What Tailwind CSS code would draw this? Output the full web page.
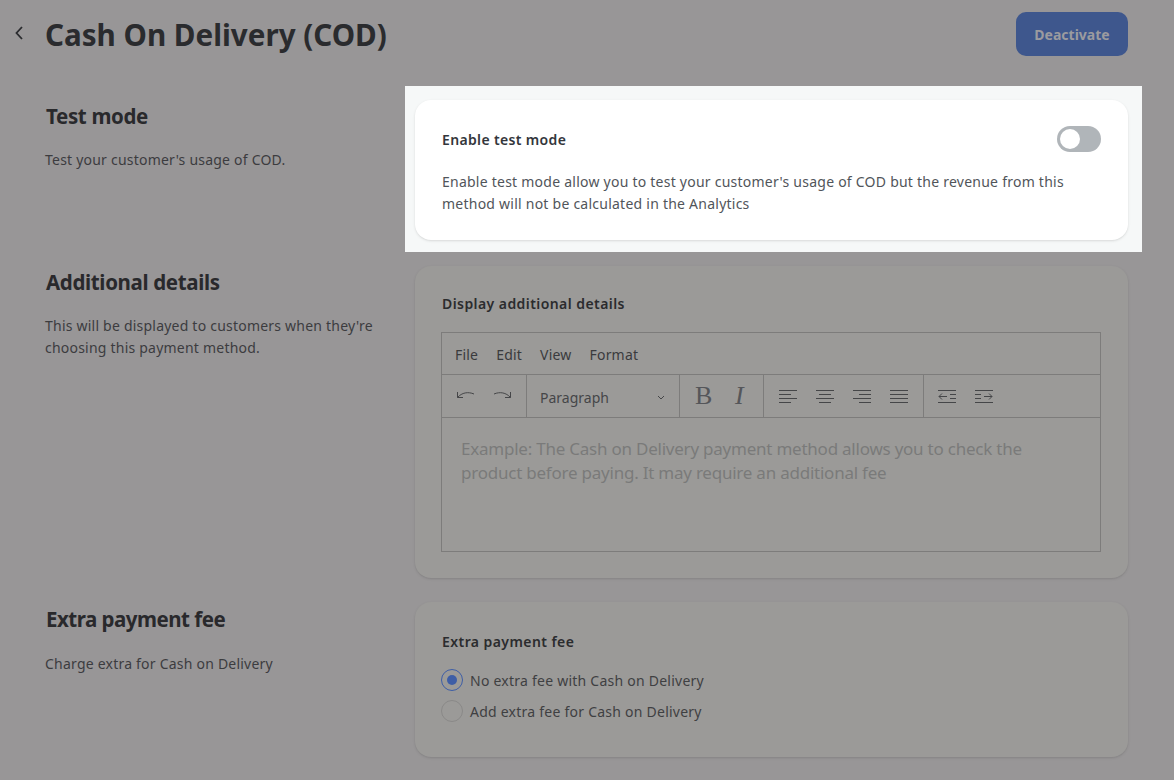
<!DOCTYPE html>
<html lang="en">
<head>
<meta charset="utf-8">
<title>Cash On Delivery (COD)</title>
<script src="https://cdn.jsdelivr.net/npm/@tailwindcss/browser@4"></script>
</head>
<body class="bg-[#989697] font-['Noto_Sans',sans-serif] text-[#29292c] overflow-hidden">
<div class="h-[780px] w-[1174px] overflow-hidden">

    <!-- header -->
    <div class="flex items-center h-[68px] pl-[14px] pr-[46px]">
        <svg class="w-[10px] h-[16px] text-[#2a2b2e] mb-[2px]" fill="none" stroke="currentColor" viewBox="0 0 10 16"><path stroke-width="1.8" d="M8 2L2.5 8 8 14"></path></svg>
        <h1 class="ml-[21px] mt-[2px] text-[29.6px] font-bold leading-none text-[#2a2b2e]">Cash On Delivery (COD)</h1>
        <button class="ml-auto w-[112px] h-[44px] rounded-[10px] bg-[#3e578d] text-[#9b9b9f] text-[14px] font-bold">Deactivate</button>
    </div>

    <!-- test mode -->
    <div class="flex items-start mt-[18px] pl-[45px]">
        <div class="w-[360px] pt-[16px]">
            <h2 class="pl-px text-[20.5px] font-bold leading-[28px] tracking-[-0.35px]">Test mode</h2>
            <p class="mt-[19px] text-[14px] leading-[22px] tracking-[0.22px] text-[#3c3c3f]">Test your customer's usage of COD.</p>
        </div>
        <div class="bg-[#f6f8f8] pt-[14px] pl-[10px] pr-[14px] pb-[12px]">
            <div class="w-[713px] h-[140px] bg-white rounded-[16px] shadow-sm px-[27px] pt-[25px]">
                <div class="flex items-center justify-between h-[28px]">
                    <span class="text-[14px] font-semibold tracking-[0.35px] text-[#33363b]">Enable test mode</span>
                    <span class="w-[44px] h-[26px] rounded-full bg-[#b0b5b9] p-[3px]"><span class="block w-[20px] h-[20px] rounded-full bg-white"></span></span>
                </div>
                <p class="mt-[18px] text-[14px] leading-[22px] tracking-[0.24px] text-[#51555a]">Enable test mode allow you to test your customer's usage of COD but the revenue from this<br>method will not be calculated in the Analytics</p>
            </div>
        </div>
    </div>

    <!-- additional details -->
    <div class="flex items-start mt-[14px] pl-[45px]">
        <div class="w-[370px] pt-[2px]">
            <h2 class="pl-px text-[20.5px] font-bold leading-[28px] tracking-[-0.35px]">Additional details</h2>
            <p class="mt-[19px] w-[340px] text-[14px] leading-[22px] tracking-[0.22px] text-[#3c3c3f]">This will be displayed to customers when they're choosing this payment method.</p>
        </div>
        <div class="w-[713px] h-[312px] bg-[#9b9a98] rounded-[16px] shadow-sm px-[26px] pt-[26px]">
            <div class="pl-px text-[14px] font-semibold leading-[24px] tracking-[0.43px] text-[#2b2c2e]">Display additional details</div>
            <div class="mt-[16px] w-[660px] h-[220px] border border-[#7d7c7b] flex flex-col text-[#3a3b3d] text-[14px]">
                <div class="flex items-center gap-[18px] h-[42px] pl-[13px] pt-[2px] border-b border-[#7d7c7b] tracking-[0.2px]">
                    <span>File</span><span>Edit</span><span>View</span><span>Format</span>
                </div>
                <div class="flex h-[43px] border-b border-[#7d7c7b] text-[#454648]">
                    <div class="flex items-center gap-[18px] w-[85px] pl-[14px] border-r border-[#7d7c7b]">
                        <svg class="w-[19px] h-[12px]" fill="none" stroke="currentColor" viewBox="0 0 19 12"><path d="M1.5 2v5.5H7M1.5 7.5C6 2.5 12 1.500 18 4"></path></svg>
                        <svg class="w-[19px] h-[12px]" fill="none" stroke="currentColor" viewBox="0 0 19 12"><path d="M17.500 2v5.500H12M17.500 7.500C13 2.500 7 1.500 1 4"></path></svg>
                    </div>
                    <div class="flex items-center justify-between w-[153px] pl-[13px] pr-[14px] pt-[2px] border-r border-[#7d7c7b]">
                        <span>Paragraph</span>
                        <svg class="w-[8px] h-[5px]" fill="none" stroke="currentColor" viewBox="0 0 8 5"><path d="M1 1l3 3 3-3"></path></svg>
                    </div>
                    <div class="flex items-center gap-[22px] w-[84px] pl-[15px] border-r border-[#7d7c7b]">
                        <span class="font-['Liberation_Serif',serif] text-[26px] leading-none text-[#55565a] w-[18px]">B</span>
                        <span class="font-['Liberation_Serif',serif] text-[26px] leading-none italic text-[#55565a]">I</span>
                    </div>
                    <div class="flex items-center gap-[19px] w-[160px] pl-[15px] border-r border-[#7d7c7b]">
                        <svg class="w-[18px] h-[15px]" stroke="currentColor" viewBox="0 0 18 15"><path d="M0 1.500h18M0 5.500h12M0 9.500h18M0 13.500h12"></path></svg>
                        <svg class="w-[18px] h-[15px]" stroke="currentColor" viewBox="0 0 18 15"><path d="M0 1.500h18M3 5.500h12M0 9.500h18M3 13.500h12"></path></svg>
                        <svg class="w-[18px] h-[15px]" stroke="currentColor" viewBox="0 0 18 15"><path d="M0 1.500h18M6 5.500h12M0 9.500h18M6 13.500h12"></path></svg>
                        <svg class="w-[18px] h-[15px]" stroke="currentColor" viewBox="0 0 18 15"><path d="M0 1.500h18M0 5.500h18M0 9.500h18M0 13.500h18"></path></svg>
                    </div>
                    <div class="flex items-center gap-[19px] pl-[14px]">
                        <svg class="w-[18px] h-[15px]" fill="none" stroke="currentColor" viewBox="0 0 18 15"><path d="M0 1.500h18M12 5.500h6M12 9.500h6M0 13.500h18M9 7.500H1M4 4.500l-3 3 3 3"></path></svg>
                        <svg class="w-[18px] h-[15px]" fill="none" stroke="currentColor" viewBox="0 0 18 15"><path d="M0 1.500h18M0 5.500h6M0 9.500h6M0 13.500h18M9 7.500h8M14 4.500l3 3-3 3"></path></svg>
                    </div>
                </div>
                <div class="px-[19px] pt-[19px] text-[17px] leading-[24px] tracking-[-0.23px] text-[#7a7a7a]">Example: The Cash on Delivery payment method allows you to check the<br>product before paying. It may require an additional fee</div>
            </div>
        </div>
    </div>

    <!-- extra payment fee -->
    <div class="flex items-start mt-[24px] pl-[45px]">
        <div class="w-[370px] pt-[3px]">
            <h2 class="pl-px text-[20.5px] font-bold leading-[28px] tracking-[-0.5px]">Extra payment fee</h2>
            <p class="mt-[20px] text-[14px] leading-[22px] tracking-[0.22px] text-[#3c3c3f]">Charge extra for Cash on Delivery</p>
        </div>
        <div class="w-[713px] h-[155px] bg-[#9b9a98] rounded-[16px] shadow-sm px-[26px] pt-[28px]">
            <div class="pl-px text-[14px] font-semibold leading-[24px] tracking-[0.43px] text-[#2b2c2e]">Extra payment fee</div>
            <div class="mt-[15px] flex items-center gap-[7px] h-[22px] text-[14px] tracking-[0.24px] text-[#3f4042]">
                <span class="flex items-center justify-center w-[22px] h-[22px] rounded-full border border-[#3e5ea6]"><span class="w-[10px] h-[10px] rounded-full bg-[#3e5ea6]"></span></span>
                <span>No extra fee with Cash on Delivery</span>
            </div>
            <div class="mt-[9px] flex items-center gap-[7px] h-[22px] text-[14px] tracking-[0.24px] text-[#3f4042]">
                <span class="w-[22px] h-[22px] rounded-full border border-[#8a8988]"></span>
                <span>Add extra fee for Cash on Delivery</span>
            </div>
        </div>
    </div>
</div>
</body>
</html>
